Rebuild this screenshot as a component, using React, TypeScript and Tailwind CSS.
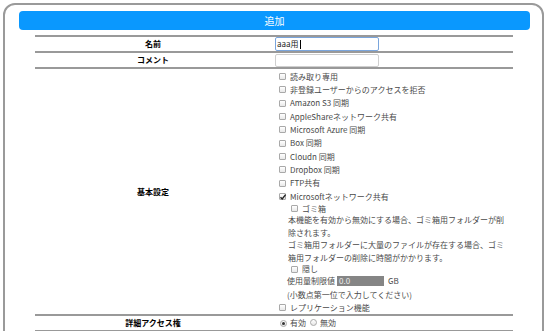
import React from 'react';

const FONT = "font-['Noto_Sans_CJK_JP','Noto_Sans',sans-serif]";

function Box({ checked = false }: { checked?: boolean }) {
  return (
    <span className="relative inline-block w-[7px] h-[7px] shrink-0 rounded-[1px] border border-[#a9a9a9] bg-gradient-to-b from-white to-[#e8e8e8]">
      {checked && (
        <svg viewBox="0 0 8 8" className="absolute left-[-1px] top-[-1px] w-[8px] h-[8px]">
          <path d="M1.5 4.2 L3.2 6 L6.6 1.6" stroke="#222" strokeWidth="1.4" fill="none" />
        </svg>
      )}
    </span>
  );
}

function Radio({ on = false }: { on?: boolean }) {
  return (
    <span className="inline-flex items-center justify-center w-[7px] h-[7px] shrink-0 rounded-full border border-[#a9a9a9] bg-gradient-to-b from-white to-[#e6e6e6]">
      {on && <span className="w-[3px] h-[3px] rounded-full bg-[#333]" />}
    </span>
  );
}

function Check({ label, checked, className = 'h-[13.33px]' }: { label: string; checked?: boolean; className?: string }) {
  return (
    <div className={`flex items-center gap-[4px] ${className}`}>
      <Box checked={checked} />
      <span>{label}</span>
    </div>
  );
}

const options = [
  '読み取り専用',
  '非登録ユーザーからのアクセスを拒否',
  'Amazon S3 同期',
  'AppleShareネットワーク共有',
  'Microsoft Azure 同期',
  'Box 同期',
  'Cloudn 同期',
  'Dropbox 同期',
  'FTP共有',
];

export default function App() {
  return (
    <div className={`w-[550px] h-[331px] overflow-hidden bg-white pt-[3px] pl-[3px] ${FONT}`}>
      <div className="w-[541px] h-[340px] rounded-[12px] border-2 border-[#9a9a9a] pt-[6px]">
        <div className="ml-[14px] w-[511px] h-[19px] rounded-[4px] bg-[#0a98fe] text-white text-[10px] leading-[19px] text-center">
          追加
        </div>

        <div className="ml-[30px] mt-[5px] w-[478px] border-t-2 border-[#999] text-[8px]">
          <div className="grid grid-cols-[240px_1fr] h-[16px] border-b-2 border-[#999]">
            <div className="flex items-center justify-center pr-[4px] font-bold text-black">名前</div>
            <div className="flex items-center">
              <div className="w-[104px] h-[14px] border border-[#7aa5dc] rounded-[2px] flex items-center pl-[1px] text-[#222]">
                aaa用<span className="w-px h-[9px] bg-black ml-px" />
              </div>
            </div>
          </div>
          <div className="grid grid-cols-[240px_1fr] h-[16px] border-b-2 border-[#999]">
            <div className="flex items-center justify-center pr-[4px] font-bold text-black">コメント</div>
            <div className="flex items-center">
              <div className="w-[104px] h-[13px] border border-[#cfcfcf] rounded-[2px]" />
            </div>
          </div>

          <div className="grid grid-cols-[240px_1fr] h-[247px] border-b-2 border-[#999]">
            <div className="flex items-center justify-center pr-[4px] font-bold text-black">基本設定</div>
            <div className="pt-[1px] pl-[4px] text-[#4a4a4a]">
              {options.map((o) => (
                <Check key={o} label={o} />
              ))}
              <Check label="Microsoftネットワーク共有" checked />
              <div className="pl-[9px]">
                <Check label="ゴミ箱" className="h-[11px] ml-[3px]" />
                <div className="leading-[12.5px]">
                  <div>本機能を有効から無効にする場合、ゴミ箱用フォルダーが削</div>
                  <div>除されます。</div>
                  <div>ゴミ箱用フォルダーに大量のファイルが存在する場合、ゴミ</div>
                  <div>箱用フォルダーの削除に時間がかかります。</div>
                </div>
                <Check label="隠し" className="h-[10px] ml-[3px]" />
                <div className="flex items-center h-[14px]">
                  <span className="-ml-[1px]">使用量制限値</span>
                  <span className="ml-[2px] w-[47px] h-[10px] bg-[#858585] text-[#eee] leading-[10px] pl-[2px]">0.0</span>
                  <span className="ml-[4px]">GB</span>
                </div>
                <div className="h-[13px] leading-[13px] -ml-[1px]">(小数点第一位で入力してください)</div>
              </div>
              <Check label="レプリケーション機能" className="h-[13px]" />
            </div>
          </div>

          <div className="grid grid-cols-[240px_1fr] h-[16px] border-b-2 border-[#999]">
            <div className="flex items-center justify-center pr-[4px] font-bold text-black">詳細アクセス権</div>
            <div className="flex items-center pl-[5px] text-[#4a4a4a]">
              <Radio on />
              <span className="ml-[3px]">有効</span>
              <span className="ml-[4px]"><Radio /></span>
              <span className="ml-[3px]">無効</span>
            </div>
          </div>
        </div>
      </div>
    </div>
  );
}
